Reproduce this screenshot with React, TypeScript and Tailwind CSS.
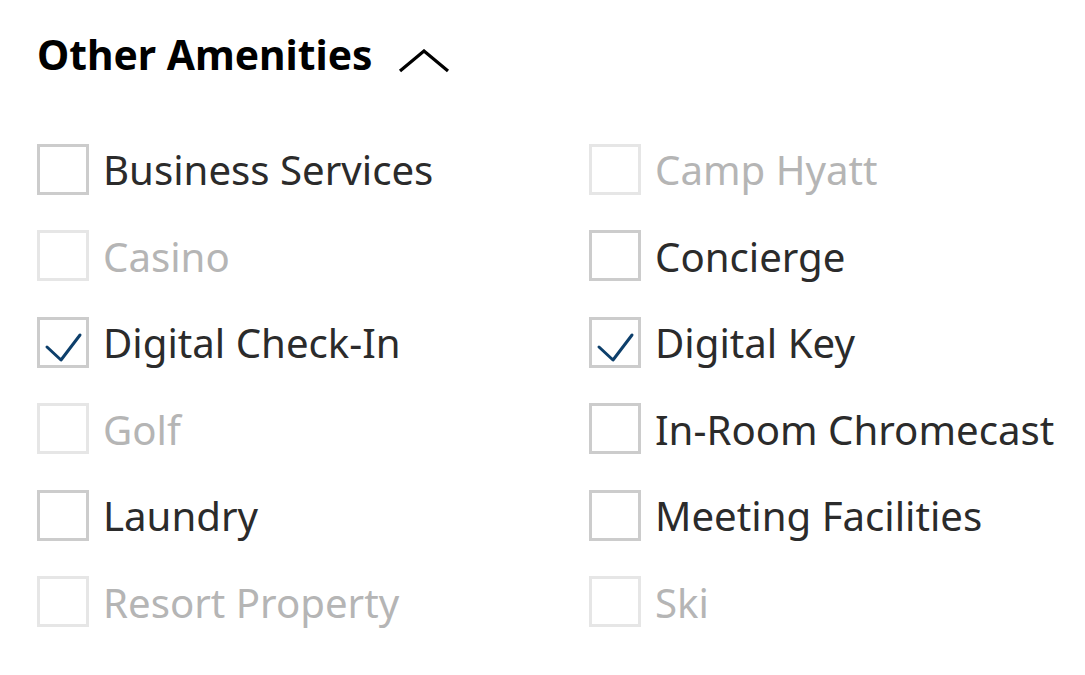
import React, { useState } from 'react';

type Amenity = { label: string; disabled?: boolean; checked?: boolean };

const AMENITIES: Amenity[] = [
  { label: 'Business Services' },
  { label: 'Camp Hyatt', disabled: true },
  { label: 'Casino', disabled: true },
  { label: 'Concierge' },
  { label: 'Digital Check-In', checked: true },
  { label: 'Digital Key', checked: true },
  { label: 'Golf', disabled: true },
  { label: 'In-Room Chromecast' },
  { label: 'Laundry' },
  { label: 'Meeting Facilities' },
  { label: 'Resort Property', disabled: true },
  { label: 'Ski', disabled: true },
];

function AmenityCheckbox({ item, checked, onToggle }: { item: Amenity; checked: boolean; onToggle: () => void }) {
  return (
    <label className={`flex h-[86.5px] items-center gap-[14px] ${item.disabled ? 'cursor-not-allowed' : 'cursor-pointer'}`}>
      <button
        type="button"
        role="checkbox"
        aria-checked={checked}
        disabled={item.disabled}
        onClick={onToggle}
        className={`flex h-[51px] w-[52px] shrink-0 items-center justify-center border-[3px] bg-white ${item.disabled ? 'border-[#e6e6e6]' : 'border-[#cccccc]'}`}
      >
        {checked && (
          <svg viewBox="0 0 46 45" className="h-[45px] w-[46px]" fill="none">
            <path d="M7 27 L21 40 L40 15" stroke="#0d3f6b" strokeWidth="3" strokeLinecap="round" strokeLinejoin="round" />
          </svg>
        )}
      </button>
      <span className={`mt-[2px] text-[40.2px] leading-none whitespace-nowrap ${item.disabled ? 'text-[#b5b5b5]' : 'text-[#2b2b2b]'}`}>
        {item.label}
      </span>
    </label>
  );
}

export default function App() {
  const [open, setOpen] = useState(true);
  const [checked, setChecked] = useState<Record<string, boolean>>(
    Object.fromEntries(AMENITIES.map(a => [a.label, !!a.checked]))
  );

  return (
    <div className="min-h-screen bg-white pl-[37px] pt-[30px] font-['Noto_Sans',sans-serif]">
      <button type="button" onClick={() => setOpen(!open)} className="flex items-center gap-[25px]">
        <span className="text-[40.8px] leading-[48px] font-bold text-black">Other Amenities</span>
        <svg viewBox="0 0 52 24" className={`mt-[14px] h-[24px] w-[52px] ${open ? '' : 'rotate-180'}`} fill="none">
          <path d="M2 22 L26 2 L50 22" stroke="#000" strokeWidth="3.2" />
        </svg>
      </button>

      {open && (
        <div className="mt-[48px] grid grid-cols-[552px_1fr]">
          {AMENITIES.map(item => (
            <AmenityCheckbox
              key={item.label}
              item={item}
              checked={checked[item.label]}
              onToggle={() => setChecked(c => ({ ...c, [item.label]: !c[item.label] }))}
            />
          ))}
        </div>
      )}
    </div>
  );
}
